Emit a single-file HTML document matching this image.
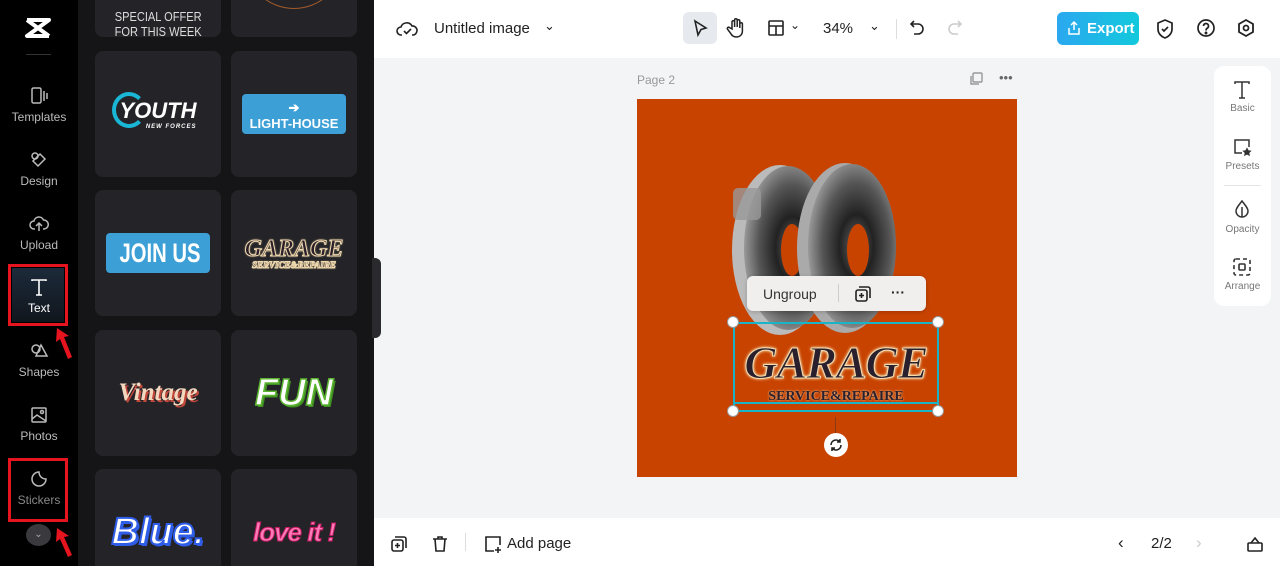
<!DOCTYPE html>
<html><head><meta charset="utf-8"><style>
*{box-sizing:border-box;margin:0;padding:0}
html,body{width:1280px;height:566px;overflow:hidden}
body{font-family:"Liberation Sans",sans-serif;background:#f2f4f6;position:relative}
.abs{position:absolute}
#side{left:0;top:0;width:78px;height:566px;background:#000}
#panel{left:78px;top:0;width:296px;height:566px;background:#151518;overflow:hidden}
.card{position:absolute;width:126px;height:126px;background:#242428;border-radius:8px;display:flex;align-items:center;justify-content:center;overflow:hidden;white-space:nowrap}
.nav{position:absolute;left:0;width:78px;text-align:center;color:#bbb;font-size:12px}
.nav svg{display:block;margin:0 auto 4px}
.red{position:absolute;border:3px solid #e5141e}
#top{left:374px;top:0;width:906px;height:58px;background:#fff}
#bot{left:374px;top:518px;width:906px;height:48px;background:#fff}
.t{position:absolute;font-size:15px;color:#222;white-space:nowrap}
</style></head><body>
<div id="side" class="abs">
 <svg class="abs" style="left:24px;top:17px" width="28" height="22" viewBox="0 0 28 22"><path d="M3 3 L25 3 L3 19 L25 19 M3 3 L25 19 M25 3 L3 19" stroke="#fff" stroke-width="4" fill="none" stroke-linejoin="round"/></svg>
 <div class="abs" style="left:26px;top:54px;width:25px;height:1px;background:#333"></div>
 <div class="nav" style="top:86px"><svg width="20" height="20" viewBox="0 0 20 20" fill="none" stroke="#bbb" stroke-width="1.5"><rect x="3" y="2" width="9" height="15" rx="1.5"/><path d="M15 5v10M18 7v6"/></svg>Templates</div>
 <div class="nav" style="top:150px"><svg width="20" height="20" viewBox="0 0 20 20" fill="none" stroke="#bbb" stroke-width="1.5"><circle cx="6" cy="6" r="3"/><path d="M11 4l5 5-7 7-5-5z"/></svg>Design</div>
 <div class="nav" style="top:214px"><svg width="20" height="20" viewBox="0 0 20 20" fill="none" stroke="#bbb" stroke-width="1.5"><path d="M6 15H5a4 4 0 010-8 5 5 0 019.5-1A4 4 0 0115 15h-1M10 17V9M7 12l3-3 3 3"/></svg>Upload</div>
 <div class="abs" style="left:12px;top:268px;width:52px;height:54px;background:linear-gradient(#1c2a3a,#11161d)"></div>
 <div class="nav" style="top:277px;color:#fff"><svg width="20" height="20" viewBox="0 0 20 20" fill="none" stroke="#fff" stroke-width="1.6"><path d="M3 4V3h14v1M10 3v15M7 18h6"/></svg>Text</div>
 <div class="red" style="left:8px;top:264px;width:60px;height:62px"></div>
 <div class="nav" style="top:341px"><svg width="20" height="20" viewBox="0 0 20 20" fill="none" stroke="#bbb" stroke-width="1.5"><circle cx="7" cy="8" r="4"/><path d="M12 4l6 11H7z"/></svg>Shapes</div>
 <div class="nav" style="top:405px"><svg width="20" height="20" viewBox="0 0 20 20" fill="none" stroke="#bbb" stroke-width="1.5"><rect x="3" y="3" width="14" height="14" rx="1"/><path d="M3 14l5-4 9 6"/><circle cx="13" cy="7" r="1.5"/></svg>Photos</div>
 <div class="nav" style="top:469px;color:#888"><svg width="20" height="20" viewBox="0 0 20 20" fill="none" stroke="#bbb" stroke-width="1.5"><path d="M17 10a7 7 0 11-7-7c0 4 3 7 7 7z"/></svg>Stickers</div>
 <div class="red" style="left:8px;top:458px;width:60px;height:64px"></div>
 <div class="abs" style="left:26px;top:524px;width:25px;height:22px;border-radius:50%;background:#3a3a3e;color:#aaa;font-size:10px;text-align:center;line-height:22px">⌄</div>
 <svg class="abs" style="left:54px;top:326px" width="20" height="36" viewBox="0 0 20 36"><path d="M3 2l12 8-5 1 8 20-4 2-8-20-4 3z" fill="#e5141e"/></svg>
 <svg class="abs" style="left:54px;top:526px" width="20" height="36" viewBox="0 0 20 36"><path d="M3 2l12 8-5 1 8 18-4 2-8-18-4 3z" fill="#e5141e"/></svg>
</div>
<div id="panel" class="abs">
 <div class="card" style="left:17px;top:-89px"><div style="color:#ddd;font:13px 'Liberation Sans Narrow','Liberation Sans';text-align:center;margin-top:100px;transform:scaleX(.85)">SPECIAL OFFER<br>FOR THIS WEEK</div></div>
 <div class="card" style="left:153px;top:-89px"><div style="width:100px;height:100px;border:1.5px solid #a05a2a;border-radius:50%;margin-top:-30px"></div></div>
 <div class="card" style="left:17px;top:51px"><div style="position:relative;color:#fff;font:900 italic 22px 'Liberation Sans';"><span style="position:absolute;left:-8px;top:-6px;width:34px;height:36px;border:4px solid #19b6d6;border-right-color:transparent;border-radius:50%"></span>YOUTH<div style="font-size:6px;text-align:right;letter-spacing:1px">NEW FORCES</div></div></div>
 <div class="card" style="left:153px;top:51px"><div style="width:104px;height:40px;background:#3c9fd6;border-radius:4px;color:#fff;font:bold 13px 'Liberation Sans';text-align:center;padding-top:6px">➔<br>LIGHT-HOUSE</div></div>
 <div class="card" style="left:17px;top:190px"><div style="width:104px;height:40px;background:#3c9fd6;border-radius:4px;color:#fff;font:bold 27px 'Liberation Sans';text-align:center;line-height:40px;"><span style="display:inline-block;transform:scaleX(.75)">JOIN US</span></div></div>
 <div class="card" style="left:153px;top:190px"><div style="text-align:center;color:#2a1f2a;font:bold italic 24px 'Liberation Serif';-webkit-text-stroke:1px #f0d9ae;text-shadow:0 0 2px #f0d9ae">GARAGE<div style="font-size:9px;margin-top:-3px">SERVICE&amp;REPAIRE</div></div></div>
 <div class="card" style="left:17px;top:330px"><div style="color:#f3d8c0;font:bold italic 25px 'Liberation Serif';text-shadow:2px 2px 0 #c0473a">Vintage</div></div>
 <div class="card" style="left:153px;top:330px"><div style="color:#fff;font:900 italic 38px 'Liberation Sans';-webkit-text-stroke:1.5px #5bb531;text-shadow:2px 2px 0 #3f8f22">FUN</div></div>
 <div class="card" style="left:17px;top:469px;height:97px;border-radius:8px 8px 0 0;align-items:flex-start;padding-top:42px"><div style="color:#fff;font:900 italic 38px 'Liberation Sans';-webkit-text-stroke:2px #2f5de8;text-shadow:2px 2px 0 #2f5de8">Blue.</div></div>
 <div class="card" style="left:153px;top:469px;height:97px;border-radius:8px 8px 0 0;align-items:flex-start;padding-top:48px"><div style="color:#ff7ab8;font:900 italic 26px 'Liberation Sans';-webkit-text-stroke:1px #c41c62;letter-spacing:-1px">love it !</div></div>
</div>
<div class="abs" style="left:372px;top:258px;width:9px;height:80px;background:#2a2a2e;border-radius:0 6px 6px 0"></div>
<div id="top" class="abs">
 <svg class="abs" style="left:22px;top:19px" width="22" height="20" viewBox="0 0 22 20" fill="none" stroke="#222" stroke-width="1.6"><path d="M6 16H5a4 4 0 010-8 6 6 0 0111-1 4.5 4.5 0 011 9h-1"/><path d="M8 12l2.5 2.5L15 10"/></svg>
 <div class="t" style="left:60px;top:20px">Untitled image</div>
 <div class="t" style="left:170px;top:18px;font-size:13px">⌄</div>
 <div class="abs" style="left:309px;top:12px;width:34px;height:32px;background:#e6e9ee;border-radius:6px"></div>
 <svg class="abs" style="left:316px;top:18px" width="20" height="20" viewBox="0 0 20 20" fill="none" stroke="#222" stroke-width="1.6"><path d="M5 3l11 7-5 1.5L8 17z"/></svg>
 <svg class="abs" style="left:352px;top:17px" width="20" height="22" viewBox="0 0 20 22" fill="none" stroke="#222" stroke-width="1.5"><path d="M6 12V5a1.3 1.3 0 012.6 0v5V3a1.3 1.3 0 012.6 0v7V4a1.3 1.3 0 012.6 0v7-4a1.3 1.3 0 012.6 0v7c0 4-3 6-6 6s-5-2-6-4l-3-4a1.3 1.3 0 012-1.5z"/></svg>
 <svg class="abs" style="left:393px;top:19px" width="18" height="18" viewBox="0 0 18 18" fill="none" stroke="#222" stroke-width="1.6"><rect x="2" y="2" width="14" height="14" rx="1"/><path d="M2 7h14M9 7v9"/></svg>
 <div class="t" style="left:416px;top:18px;font-size:12px">⌄</div>
 <div class="t" style="left:449px;top:20px">34%</div>
 <div class="t" style="left:495px;top:18px;font-size:13px">⌄</div>
 <div class="abs" style="left:522px;top:19px;width:1px;height:20px;background:#ddd"></div>
 <svg class="abs" style="left:534px;top:19px" width="18" height="18" viewBox="0 0 18 18" fill="none" stroke="#222" stroke-width="1.6"><path d="M6 2L3 5l3 3M3 5h7a5 5 0 010 10H6"/></svg>
 <svg class="abs" style="left:572px;top:19px" width="18" height="18" viewBox="0 0 18 18" fill="none" stroke="#ccc" stroke-width="1.6"><path d="M12 2l3 3-3 3M15 5H8a5 5 0 000 10h4"/></svg>
 <div class="abs" style="left:683px;top:12px;width:82px;height:33px;border-radius:6px;background:linear-gradient(90deg,#2ba8f0,#12c9dc);color:#fff;font:bold 15px 'Liberation Sans';line-height:33px;padding-left:30px">Export</div>
 <svg class="abs" style="left:693px;top:20px" width="14" height="16" viewBox="0 0 14 16" fill="none" stroke="#fff" stroke-width="1.5"><path d="M7 10V2M4 5l3-3 3 3M2 8v6h10V8"/></svg>
 <svg class="abs" style="left:781px;top:18px" width="20" height="22" viewBox="0 0 20 22" fill="none" stroke="#222" stroke-width="1.7"><path d="M10 2l7 3v6c0 5-4 8-7 9-3-1-7-4-7-9V5z"/><path d="M7 11l2 2 4-4"/></svg>
 <svg class="abs" style="left:822px;top:18px" width="20" height="20" viewBox="0 0 20 20" fill="none" stroke="#222" stroke-width="1.7"><circle cx="10" cy="10" r="8"/><path d="M7.5 8a2.5 2.5 0 114 2c-1 .6-1.5 1-1.5 2.5"/><circle cx="10" cy="15" r=".6" fill="#222"/></svg>
 <svg class="abs" style="left:862px;top:18px" width="20" height="20" viewBox="0 0 20 20" fill="none" stroke="#222" stroke-width="1.8"><path d="M10 2l7 4v8l-7 4-7-4V6z"/><circle cx="10" cy="10" r="2.5"/></svg>
</div>
<div class="abs" style="left:637px;top:73px;font-size:12px;color:#999">Page 2</div>
<svg class="abs" style="left:969px;top:72px" width="14" height="14" viewBox="0 0 14 14" fill="none" stroke="#888" stroke-width="1.2"><rect x="4" y="1" width="9" height="9" rx="1"/><path d="M2 4v8h8"/></svg>
<div class="abs" style="left:999px;top:70px;font-size:13px;color:#666">•••</div>
<div class="abs" style="left:637px;top:99px;width:380px;height:378px;background:#c84300"></div>
<svg class="abs" style="left:730px;top:160px" width="170" height="180" viewBox="0 0 170 180">
 <defs><radialGradient id="g" cx=".55" cy=".5" r=".55"><stop offset="0" stop-color="#666"/><stop offset=".35" stop-color="#222"/><stop offset=".7" stop-color="#555"/><stop offset="1" stop-color="#999"/></radialGradient></defs>
 <ellipse cx="50" cy="90" rx="48" ry="85" fill="#bbb"/>
 <ellipse cx="58" cy="88" rx="44" ry="82" fill="url(#g)"/>
 <ellipse cx="62" cy="90" rx="11" ry="26" fill="#c84300"/>
 <ellipse cx="115" cy="88" rx="48" ry="85" fill="#aaa"/>
 <ellipse cx="122" cy="86" rx="44" ry="82" fill="url(#g)"/>
 <ellipse cx="128" cy="90" rx="11" ry="26" fill="#c84300"/>
 <rect x="3" y="28" width="28" height="32" rx="5" fill="#999" opacity=".8"/>
</svg>
<div class="abs" style="left:747px;top:276px;width:179px;height:35px;background:#f1eeee;border-radius:6px;box-shadow:0 1px 4px rgba(0,0,0,.2)"></div>
<div class="abs" style="left:763px;top:286px;font-size:14px;color:#333">Ungroup</div>
<div class="abs" style="left:838px;top:284px;width:1px;height:18px;background:#ccc"></div>
<svg class="abs" style="left:854px;top:285px" width="18" height="18" viewBox="0 0 18 18" fill="none" stroke="#222" stroke-width="1.6"><rect x="2" y="5" width="11" height="11" rx="2"/><path d="M5 2h9a2 2 0 012 2v9M7.5 8v5M5 10.5h5"/></svg>
<div class="abs" style="left:891px;top:284px;font-size:14px;color:#222;font-weight:bold">···</div>
<div class="abs" style="left:733px;top:322px;width:206px;height:90px;border:2px solid #1ab4c8"></div>
<div class="abs" style="left:736px;top:336px;width:200px;text-align:center;color:#2a1f2c;font:900 italic 46px 'Liberation Serif';-webkit-text-stroke:1px #f5ddb0;text-shadow:0 0 3px #f5ddb0,0 0 3px #f5ddb0;letter-spacing:-1px">GARAGE</div>
<div class="abs" style="left:736px;top:389px;width:200px;text-align:center;color:#2a1f2c;font:900 14px 'Liberation Serif';text-shadow:0 0 2px #f5ddb0">SERVICE&amp;REPAIRE</div>
<div class="abs" style="left:733px;top:402px;width:206px;height:2px;background:#1ab4c8"></div>
<div class="abs" style="left:727px;top:316px;width:12px;height:12px;border-radius:50%;background:#fff;border:1px solid #999"></div>
<div class="abs" style="left:932px;top:316px;width:12px;height:12px;border-radius:50%;background:#fff;border:1px solid #999"></div>
<div class="abs" style="left:727px;top:405px;width:12px;height:12px;border-radius:50%;background:#fff;border:1px solid #999"></div>
<div class="abs" style="left:932px;top:405px;width:12px;height:12px;border-radius:50%;background:#fff;border:1px solid #999"></div>
<div class="abs" style="left:835px;top:417px;width:1px;height:16px;background:#8a3a10"></div>
<div class="abs" style="left:824px;top:433px;width:24px;height:24px;border-radius:50%;background:#fff"></div>
<svg class="abs" style="left:829px;top:438px" width="14" height="14" viewBox="0 0 14 14" fill="none" stroke="#222" stroke-width="1.6"><path d="M2 7a5 5 0 019-3M12 7a5 5 0 01-9 3M11 1v3H8M3 13v-3h3"/></svg>
<div class="abs" style="left:1214px;top:66px;width:57px;height:240px;background:#fff;border-radius:10px"></div>
<svg class="abs" style="left:1232px;top:80px" width="20" height="20" viewBox="0 0 20 20" fill="none" stroke="#333" stroke-width="1.5"><path d="M3 4V2h14v2M10 2v16M7 18h6"/></svg>
<div class="abs" style="left:1214px;top:103px;width:57px;text-align:center;font-size:10px;color:#777">Basic</div>
<svg class="abs" style="left:1232px;top:137px" width="20" height="20" viewBox="0 0 20 20" fill="none" stroke="#333" stroke-width="1.5"><path d="M10 16H3V3h14v7"/><path d="M15 12l1 2 2 .3-1.5 1.4.4 2-1.9-1-1.9 1 .4-2L12 14.3l2-.3z" fill="#333"/></svg>
<div class="abs" style="left:1214px;top:161px;width:57px;text-align:center;font-size:10px;color:#777">Presets</div>
<div class="abs" style="left:1224px;top:185px;width:37px;height:1px;background:#e5e5e5"></div>
<svg class="abs" style="left:1233px;top:199px" width="18" height="20" viewBox="0 0 18 20" fill="none" stroke="#333" stroke-width="1.5"><path d="M9 2c3 4 6 7 6 10a6 6 0 01-12 0c0-3 3-6 6-10z"/><path d="M9 8v10" /></svg>
<div class="abs" style="left:1214px;top:224px;width:57px;text-align:center;font-size:10px;color:#777">Opacity</div>
<svg class="abs" style="left:1232px;top:257px" width="20" height="20" viewBox="0 0 20 20" fill="none" stroke="#333" stroke-width="1.6"><rect x="2" y="2" width="16" height="16" rx="2" stroke-dasharray="4 3"/><rect x="7" y="7" width="6" height="6" rx="1"/></svg>
<div class="abs" style="left:1214px;top:281px;width:57px;text-align:center;font-size:10px;color:#777">Arrange</div>
<div id="bot" class="abs">
 <svg class="abs" style="left:16px;top:17px" width="18" height="18" viewBox="0 0 18 18" fill="none" stroke="#222" stroke-width="1.6"><rect x="2" y="5" width="11" height="11" rx="2"/><path d="M5 2h9a2 2 0 012 2v9M7.5 8v5M5 10.5h5"/></svg>
 <svg class="abs" style="left:57px;top:17px" width="18" height="18" viewBox="0 0 18 18" fill="none" stroke="#222" stroke-width="1.6"><path d="M2 4h14M7 4V2h4v2M4 4l1 12h8l1-12"/></svg>
 <div class="abs" style="left:91px;top:15px;width:1px;height:18px;background:#ddd"></div>
 <svg class="abs" style="left:110px;top:17px" width="18" height="18" viewBox="0 0 18 18" fill="none" stroke="#222" stroke-width="1.6"><path d="M10 16H2V2h14v8M14 12v6M11 15h6"/></svg>
 <div class="t" style="left:133px;top:17px">Add page</div>
 <div class="t" style="left:744px;top:15px;font-size:17px">‹</div>
 <div class="t" style="left:777px;top:17px">2/2</div>
 <div class="t" style="left:822px;top:15px;font-size:17px;color:#ccc">›</div>
 <svg class="abs" style="left:872px;top:17px" width="18" height="18" viewBox="0 0 18 18" fill="none" stroke="#222" stroke-width="1.6"><rect x="2" y="8" width="14" height="8" rx="1"/><path d="M5 8l4-5 4 5"/></svg>
</div>
</body></html>
